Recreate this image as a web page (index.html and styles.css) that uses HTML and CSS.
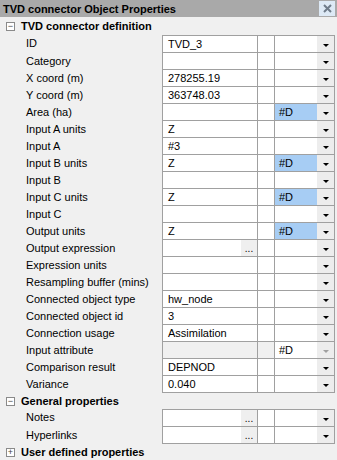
FILE: index.html
```html
<!DOCTYPE html>
<html>
<head>
<meta charset="utf-8">
<link rel="stylesheet" href="styles.css">
</head>
<body>
<div class="panel">
  <div class="title">
    <span class="title-text">TVD connector Object Properties</span>
    <span class="close"><svg width="9" height="9" viewBox="0 0 9 9"><path d="M1 1 L8 8 M8 1 L1 8" stroke="#6f7c8a" stroke-width="2"/></svg></span>
  </div>

  <div class="group first"><span class="toggle">−</span>TVD connector definition</div>
  <div class="block">
    <div class="row"><div class="label">ID</div><div class="cells"><div class="c1">TVD_3</div><div class="c2"></div><div class="c3"></div><div class="btn"><i class="arrow"></i></div></div></div>
    <div class="row"><div class="label">Category</div><div class="cells"><div class="c1"></div><div class="c2"></div><div class="c3"></div><div class="btn"><i class="arrow"></i></div></div></div>
    <div class="row"><div class="label">X coord (m)</div><div class="cells"><div class="c1">278255.19</div><div class="c2"></div><div class="c3"></div><div class="btn"><i class="arrow"></i></div></div></div>
    <div class="row"><div class="label">Y coord (m)</div><div class="cells"><div class="c1">363748.03</div><div class="c2"></div><div class="c3"></div><div class="btn"><i class="arrow"></i></div></div></div>
    <div class="row"><div class="label">Area (ha)</div><div class="cells"><div class="c1"></div><div class="c2"></div><div class="c3 hl">#D</div><div class="btn"><i class="arrow"></i></div></div></div>
    <div class="row"><div class="label">Input A units</div><div class="cells"><div class="c1">Z</div><div class="c2"></div><div class="c3"></div><div class="btn"><i class="arrow"></i></div></div></div>
    <div class="row"><div class="label">Input A</div><div class="cells"><div class="c1">#3</div><div class="c2"></div><div class="c3"></div><div class="btn"><i class="arrow"></i></div></div></div>
    <div class="row"><div class="label">Input B units</div><div class="cells"><div class="c1">Z</div><div class="c2"></div><div class="c3 hl">#D</div><div class="btn"><i class="arrow"></i></div></div></div>
    <div class="row"><div class="label">Input B</div><div class="cells"><div class="c1"></div><div class="c2"></div><div class="c3"></div><div class="btn"><i class="arrow"></i></div></div></div>
    <div class="row"><div class="label">Input C units</div><div class="cells"><div class="c1">Z</div><div class="c2"></div><div class="c3 hl">#D</div><div class="btn"><i class="arrow"></i></div></div></div>
    <div class="row"><div class="label">Input C</div><div class="cells"><div class="c1"></div><div class="c2"></div><div class="c3"></div><div class="btn"><i class="arrow"></i></div></div></div>
    <div class="row"><div class="label">Output units</div><div class="cells"><div class="c1">Z</div><div class="c2"></div><div class="c3 hl">#D</div><div class="btn"><i class="arrow"></i></div></div></div>
    <div class="row"><div class="label">Output expression</div><div class="cells"><div class="c1"><span class="dots">...</span></div><div class="c2"></div><div class="c3"></div><div class="btn"><i class="arrow"></i></div></div></div>
    <div class="row"><div class="label">Expression units</div><div class="cells"><div class="c1"></div><div class="c2"></div><div class="c3"></div><div class="btn"><i class="arrow"></i></div></div></div>
    <div class="row"><div class="label">Resampling buffer (mins)</div><div class="cells"><div class="c1"></div><div class="c2"></div><div class="c3"></div><div class="btn"><i class="arrow"></i></div></div></div>
    <div class="row"><div class="label">Connected object type</div><div class="cells"><div class="c1">hw_node</div><div class="c2"></div><div class="c3"></div><div class="btn"><i class="arrow"></i></div></div></div>
    <div class="row"><div class="label">Connected object id</div><div class="cells"><div class="c1">3</div><div class="c2"></div><div class="c3"></div><div class="btn"><i class="arrow"></i></div></div></div>
    <div class="row"><div class="label">Connection usage</div><div class="cells"><div class="c1">Assimilation</div><div class="c2"></div><div class="c3"></div><div class="btn"><i class="arrow"></i></div></div></div>
    <div class="row"><div class="label">Input attribute</div><div class="cells"><div class="c1 ro"></div><div class="c2 ro"></div><div class="c3">#D</div><div class="btn"><i class="arrow dim"></i></div></div></div>
    <div class="row"><div class="label">Comparison result</div><div class="cells"><div class="c1">DEPNOD</div><div class="c2"></div><div class="c3"></div><div class="btn"><i class="arrow"></i></div></div></div>
    <div class="row"><div class="label">Variance</div><div class="cells"><div class="c1">0.040</div><div class="c2"></div><div class="c3"></div><div class="btn"><i class="arrow"></i></div></div></div>
  </div>

  <div class="group"><span class="toggle">−</span>General properties</div>
  <div class="block">
    <div class="row"><div class="label">Notes</div><div class="cells"><div class="c1"><span class="dots">...</span></div><div class="c2"></div><div class="c3"></div><div class="btn"><i class="arrow"></i></div></div></div>
    <div class="row"><div class="label">Hyperlinks</div><div class="cells"><div class="c1"><span class="dots">...</span></div><div class="c2"></div><div class="c3"></div><div class="btn"><i class="arrow"></i></div></div></div>
  </div>

  <div class="group"><span class="toggle">+</span>User defined properties</div>
</div>
</body>
</html>
```

FILE: styles.css
```css
html, body {
  margin: 0;
  padding: 0;
  background: #f0f0f0;
}
.panel {
  width: 337px;
  height: 460px;
  overflow: hidden;
  font-family: "Liberation Sans", Arial, sans-serif;
  font-size: 11px;
  color: #000;
  background: #f0f0f0;
}
.title {
  height: 17px;
  background: #a9a9a9;
  display: flex;
  align-items: center;
  justify-content: space-between;
  padding-left: 3px;
  padding-right: 2px;
}
.title-text {
  font-weight: bold;
  font-size: 11px;
}
.close {
  width: 16px;
  height: 15px;
  background: #dde9f5;
  display: flex;
  align-items: center;
  justify-content: center;
}
.group {
  height: 16px;
  display: flex;
  align-items: center;
  font-weight: bold;
  font-size: 11px;
  padding-left: 6px;
}
.group.first {
  height: 18px;
}
.toggle {
  width: 7px;
  height: 7px;
  border: 1px solid #8a8a8a;
  background: #fff;
  color: #444;
  font-weight: normal;
  font-size: 9px;
  line-height: 7px;
  text-align: center;
  margin-right: 6px;
  overflow: hidden;
}
.block {
  display: flex;
  flex-direction: column;
}
.row {
  display: flex;
  height: 17px;
}
.label {
  width: 162px;
  padding-left: 26px;
  box-sizing: border-box;
  line-height: 16px;
  white-space: nowrap;
  overflow: hidden;
}
.cells {
  display: flex;
  width: 173px;
  box-sizing: border-box;
  border-left: 1px solid #a0a0a0;
  border-right: 1px solid #a0a0a0;
  border-bottom: 1px solid #a0a0a0;
  background: #fff;
}
.block .row:first-child .cells {
  border-top: 1px solid #a0a0a0;
}
.block .row:first-child {
  height: 18px;
}
.c1, .c2, .c3 {
  height: 16px;
  line-height: 16px;
  box-sizing: border-box;
  white-space: nowrap;
  overflow: hidden;
}
.c1 {
  width: 95px;
  padding-left: 5px;
  border-right: 1px solid #a0a0a0;
  position: relative;
}
.c2 {
  width: 17px;
  border-right: 1px solid #a0a0a0;
}
.c3 {
  width: 42px;
  padding-left: 4px;
}
.hl {
  background: #a7cdf4;
}
.ro {
  background: #f0f0f0;
}
.btn {
  width: 17px;
  height: 16px;
  background: #ededed;
  display: flex;
  align-items: center;
  justify-content: center;
}
.arrow {
  width: 0;
  height: 0;
  border-left: 3px solid transparent;
  border-right: 3px solid transparent;
  border-top: 3px solid #000;
  margin-top: 2px;
}
.arrow.dim {
  border-top-color: #a0a0a0;
}
.dots {
  position: absolute;
  right: 0;
  top: 0;
  width: 16px;
  height: 16px;
  background: #efefef;
  font-size: 10px;
  line-height: 18px;
  text-align: center;
}
```
